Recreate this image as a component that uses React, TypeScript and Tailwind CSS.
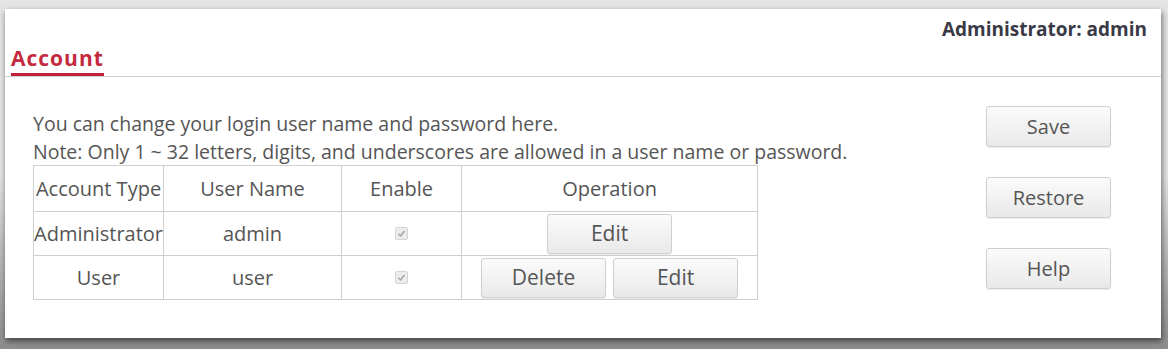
import React from "react";

const font = { fontFamily: '"Open Sans", "Noto Sans", sans-serif' };

function Btn({ label, className = "" }: { label: string; className?: string }) {
  return (
    <button
      className={
        "flex items-center justify-center rounded-[3px] border border-[#cfcfcf] bg-gradient-to-b from-[#fbfbfb] to-[#e9e9e9] text-[#555] shadow-[0_1px_1px_rgba(0,0,0,0.08)] " +
        className
      }
    >
      {label}
    </button>
  );
}

function Check() {
  return (
    <span className="inline-flex h-[13px] w-[13px] items-center justify-center rounded-[2px] border border-[#d4d4d4] bg-[#ececec]">
      <svg width="9" height="9" viewBox="0 0 9 9">
        <path d="M1.5 4.8 L3.6 6.8 L7.6 2" fill="none" stroke="#a8a8a8" strokeWidth="1.6" />
      </svg>
    </span>
  );
}

export default function App() {
  const cell = "border border-[#cfcfcf] text-center align-middle p-0 whitespace-nowrap";
  return (
    <div
      className="h-[349px] w-[1168px] overflow-hidden bg-gradient-to-b from-[#e4e4e4] via-[#e4e4e4] to-[#8c8c8c] pl-[5px] pr-[7px] pt-[9px]"
      style={font}
    >
      <div className="flex h-[329px] flex-col bg-white shadow-[1px_3px_6px_rgba(0,0,0,0.55)]">
        <div className="flex justify-end pr-[14px] pt-[7px] text-[19px] font-bold leading-[26px] text-[#3a3a46]">
          Administrator: admin
        </div>
        <div className="mt-[3px] border-b border-[#cfcfcf] pl-[6px]">
          <div className="inline-block border-b-[3px] border-[#c0243a] pb-[1px] text-[21px] font-bold leading-[27px] tracking-[1px] text-[#c42a3e]">
            Account
          </div>
        </div>
        <div className="flex flex-1">
          <div className="flex-1 pl-[28px] pt-[33px]">
            <div className="whitespace-nowrap text-[19.5px] leading-[28px] text-[#555]">
              You can change your login user name and password here.
            </div>
            <div className="whitespace-nowrap text-[19.5px] leading-[27px] text-[#555]">
              Note: Only 1 ~ 32 letters, digits, and underscores are allowed in a user name or password.
            </div>
            <table className="table-fixed border-collapse text-[20px] text-[#555]">
              <tbody>
                <tr className="h-[46px]">
                  <td className={cell + " w-[129px]"}>Account Type</td>
                  <td className={cell + " w-[178px]"}>User Name</td>
                  <td className={cell + " w-[120px]"}>Enable</td>
                  <td className={cell + " w-[296px]"}>Operation</td>
                </tr>
                <tr className="h-[44px]">
                  <td className={cell}>Administrator</td>
                  <td className={cell}>admin</td>
                  <td className={cell}>
                    <div className="flex justify-center"><Check /></div>
                  </td>
                  <td className={cell}>
                    <div className="flex justify-center">
                      <Btn label="Edit" className="h-[40px] w-[125px] text-[21px]" />
                    </div>
                  </td>
                </tr>
                <tr className="h-[44px]">
                  <td className={cell}>User</td>
                  <td className={cell}>user</td>
                  <td className={cell}>
                    <div className="flex justify-center"><Check /></div>
                  </td>
                  <td className={cell}>
                    <div className="flex justify-center gap-[7px]">
                      <Btn label="Delete" className="h-[40px] w-[125px] text-[21px]" />
                      <Btn label="Edit" className="h-[40px] w-[125px] text-[21px]" />
                    </div>
                  </td>
                </tr>
              </tbody>
            </table>
          </div>
          <div className="flex flex-col gap-[30px] pr-[50px] pt-[29px]">
            <Btn label="Save" className="h-[41px] w-[125px] text-[20px]" />
            <Btn label="Restore" className="h-[41px] w-[125px] text-[20px]" />
            <Btn label="Help" className="h-[41px] w-[125px] text-[20px]" />
          </div>
        </div>
      </div>
    </div>
  );
}
